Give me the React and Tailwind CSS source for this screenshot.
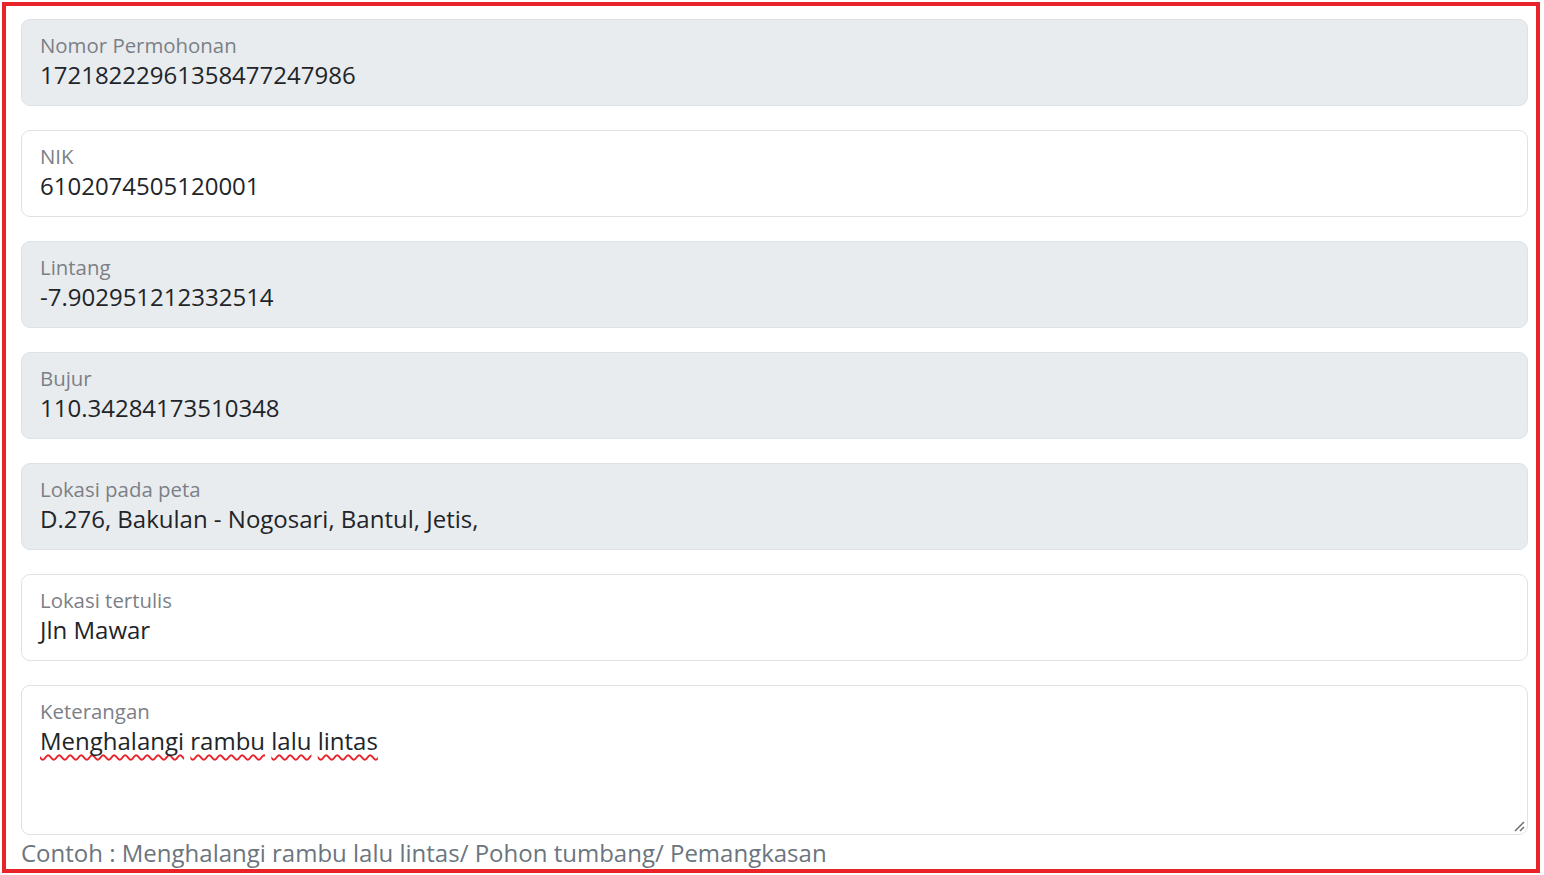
const fields = [
  { label: 'Nomor Permohonan', value: '17218222961358477247986', disabled: true },
  { label: 'NIK', value: '6102074505120001', disabled: false },
  { label: 'Lintang', value: '-7.902951212332514', disabled: true },
  { label: 'Bujur', value: '110.34284173510348', disabled: true },
  { label: 'Lokasi pada peta', value: 'D.276, Bakulan - Nogosari, Bantul, Jetis,', disabled: true },
  { label: 'Lokasi tertulis', value: 'Jln Mawar', disabled: false },
]

function FloatingField({ label, value, disabled }) {
  return (
    <div
      className={`h-[87px] rounded-[9px] border border-[#dee2e6] px-[18px] pt-[13px] ${
        disabled ? 'bg-[#e9ecef]' : 'bg-white'
      }`}
    >
      <div className="text-[20.4px] leading-[24px] text-[#7b8086]">{label}</div>
      <div className="mt-[2px] text-[24px] leading-[32px] text-[#212529]">{value}</div>
    </div>
  )
}

function Grip() {
  return (
    <svg width="12" height="12" viewBox="0 0 12 12" className="absolute bottom-[2px] right-[2px]">
      <path d="M11 2 L2 11" stroke="#6b6b6b" strokeWidth="1.4" />
      <path d="M11 7 L7 11" stroke="#6b6b6b" strokeWidth="1.4" />
    </svg>
  )
}

export default function App() {
  const words = ['Menghalangi', 'rambu', 'lalu', 'lintas']

  return (
    <div className="min-h-[875px] bg-white font-['Open_Sans',sans-serif]">
      <div className="ml-[2px] mt-[2px] h-[871px] w-[1538px] overflow-hidden border-[4px] border-[#e8232a] pl-[15px] pr-[8px] pt-[13px]">
        <div className="flex flex-col gap-[24px]">
          {fields.map((f) => (
            <FloatingField key={f.label} {...f} />
          ))}

          <div className="relative h-[150px] rounded-[9px] border border-[#dee2e6] bg-white px-[18px] pt-[13px]">
            <div className="text-[20.4px] leading-[24px] text-[#7b8086]">Keterangan</div>
            <div className="mt-[2px] text-[24px] leading-[32px] text-[#212529]">
              {words.map((w, i) => (
                <span key={w}>
                  <span className="underline decoration-wavy decoration-[#e8232a] decoration-[1.5px] underline-offset-[4px] [text-decoration-skip-ink:none]">
                    {w}
                  </span>
                  {i < words.length - 1 ? ' ' : ''}
                </span>
              ))}
            </div>
            <Grip />
          </div>
        </div>
        <p className="text-[24px] leading-[36px] text-[#6c757d]">
          Contoh : Menghalangi rambu lalu lintas/ Pohon tumbang/ Pemangkasan
        </p>
      </div>
    </div>
  )
}
